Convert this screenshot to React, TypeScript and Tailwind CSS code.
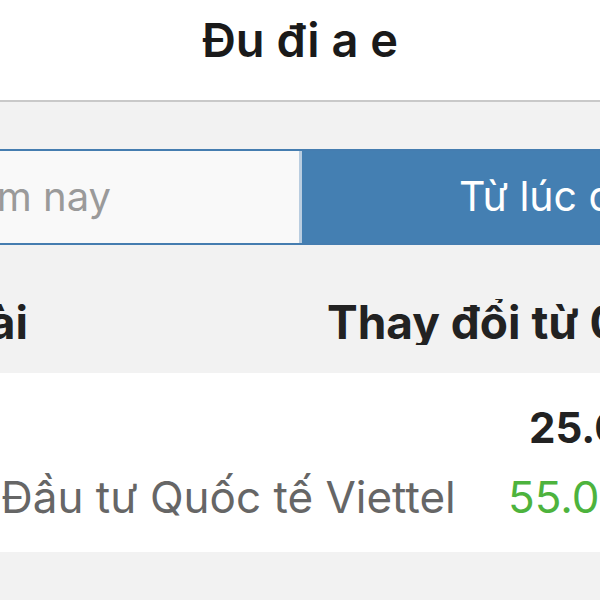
import React from "react";

const font = { fontFamily: "Inter, Roboto, 'Noto Sans', sans-serif" };

export default function App() {
  return (
    <div
      className="w-[600px] h-[600px] overflow-hidden bg-[#f2f2f2] flex flex-col"
      style={font}
    >
      {/* nav bar */}
      <div className="h-[102px] shrink-0 bg-white border-b-2 border-[#c9c9c9] flex justify-center pt-[12px]">
        <h1 className="text-[47px] leading-[56px] font-semibold text-[#1a1a1a] whitespace-nowrap">
          Đu đi a e
        </h1>
      </div>

      {/* segmented control */}
      <div className="pt-[47px] pb-[2px] shrink-0">
        <div className="h-[96px] flex border-y-2 border-[#457db0]">
          <div className="w-[299px] shrink-0 bg-[#f9f9f9] flex items-center justify-end pr-[188px]">
            <span className="text-[40px] text-[#9a9a9a] whitespace-nowrap">Hôm nay</span>
          </div>
          <div className="w-[3px] shrink-0 bg-[#b9cde0]" />
          <div className="flex-1 min-w-0 bg-[#447fb2] flex items-center pl-[157px] overflow-hidden">
            <span className="text-[41px] text-white whitespace-nowrap">Từ lúc đầu</span>
          </div>
        </div>
      </div>

      {/* table header */}
      <div className="h-[126px] shrink-0 flex items-start pt-[52px]">
        <div className="w-[28px] shrink-0 flex justify-end">
          <span className="text-[46px] leading-[46px] font-bold text-[#222] whitespace-nowrap">Tài</span>
        </div>
        <div className="flex-1 min-w-0 pl-[299px] overflow-hidden">
          <span className="text-[46px] leading-[46px] font-bold text-[#222] whitespace-nowrap">Thay đổi từ 01/01</span>
        </div>
      </div>

      {/* data row */}
      <div className="h-[179px] shrink-0 bg-white flex pt-[33px] overflow-hidden">
        <div className="w-[500px] shrink-0 pl-[1px] flex flex-col gap-[25px]">
          <div className="h-[44px]" />
          <span className="text-[44px] leading-[44px] text-[#666] whitespace-nowrap">Đầu tư Quốc tế Viettel</span>
        </div>
        <div className="flex-1 min-w-0 flex flex-col items-start pl-[8px] gap-[25px]">
          <span className="text-[42px] leading-[44px] font-bold text-[#222] whitespace-nowrap pl-[21px]">25.000</span>
          <span className="text-[44px] leading-[44px] text-[#4db33d] whitespace-nowrap">55.000</span>
        </div>
      </div>
    </div>
  );
}
